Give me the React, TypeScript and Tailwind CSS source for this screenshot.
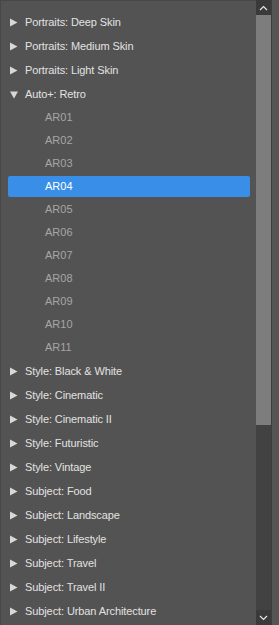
const categoriesTop = ["Portraits: Deep Skin", "Portraits: Medium Skin", "Portraits: Light Skin"];
const children = ["AR01", "AR02", "AR03", "AR04", "AR05", "AR06", "AR07", "AR08", "AR09", "AR10", "AR11"];
const categoriesBottom = [
  "Style: Black & White",
  "Style: Cinematic",
  "Style: Cinematic II",
  "Style: Futuristic",
  "Style: Vintage",
  "Subject: Food",
  "Subject: Landscape",
  "Subject: Lifestyle",
  "Subject: Travel",
  "Subject: Travel II",
  "Subject: Urban Architecture",
];

function Caret({ open }: { open?: boolean }) {
  return (
    <svg width="8" height="9" viewBox="0 0 8 9" className="shrink-0">
      {open ? <polygon points="0,1.5 8,1.5 4,8.5" fill="#d8d8d8" /> : <polygon points="0,0.5 7.5,4.5 0,8.5" fill="#d8d8d8" />}
    </svg>
  );
}

function Category({ label, open }: { label: string; open?: boolean }) {
  return (
    <div className="h-6 flex items-center pl-[9px] gap-[7px] text-[#e2e2e2] whitespace-nowrap tracking-[-0.1px]">
      <Caret open={open} />
      <span>{label}</span>
    </div>
  );
}

function Chevron({ down }: { down?: boolean }) {
  return (
    <svg width="9" height="6" viewBox="0 0 9 6">
      <polyline
        points={down ? "1,1 4.5,4.5 8,1" : "1,5 4.5,1.5 8,5"}
        fill="none"
        stroke="#e6e6e6"
        strokeWidth="1.2"
      />
    </svg>
  );
}

export default function App() {
  return (
    <div
      className="w-[279px] h-[625px] bg-[#535353] flex overflow-hidden text-[11px]"
      style={{ fontFamily: '"Liberation Sans", Arial, sans-serif' }}
    >
      {/* Tree */}
      <div className="flex-1 min-w-0 border-l border-t border-[#474747] pt-[9px] overflow-hidden">
        {categoriesTop.map((c) => (
          <Category key={c} label={c} />
        ))}
        <Category label="Auto+: Retro" open />
        {children.map((c) => {
          const selected = c === "AR04";
          return (
            <div key={c} className="h-[23px] flex items-stretch ml-[7px] mr-1.5">
              <div
                className={`flex-1 flex items-center pl-[37px] rounded-[2px] ${
                  selected ? "bg-[#398ee7] text-white my-px" : "text-[#a6a6a6]"
                }`}
              >
                {c}
              </div>
            </div>
          );
        })}
        {categoriesBottom.map((c) => (
          <Category key={c} label={c} />
        ))}
      </div>

      {/* Scrollbar */}
      <div className="w-4 flex flex-col bg-[#424242] border-r border-[#3d3d3d]">
        <div className="h-[15px] bg-[#3a3a3a] flex items-center justify-center">
          <Chevron />
        </div>
        <div className="h-[410px] bg-[#7d7d7d]" />
        <div className="flex-1" />
        <div className="h-[15px] bg-[#3a3a3a] flex items-center justify-center">
          <Chevron down />
        </div>
      </div>
      <div className="w-[7px] bg-[#545454]" />
    </div>
  );
}
